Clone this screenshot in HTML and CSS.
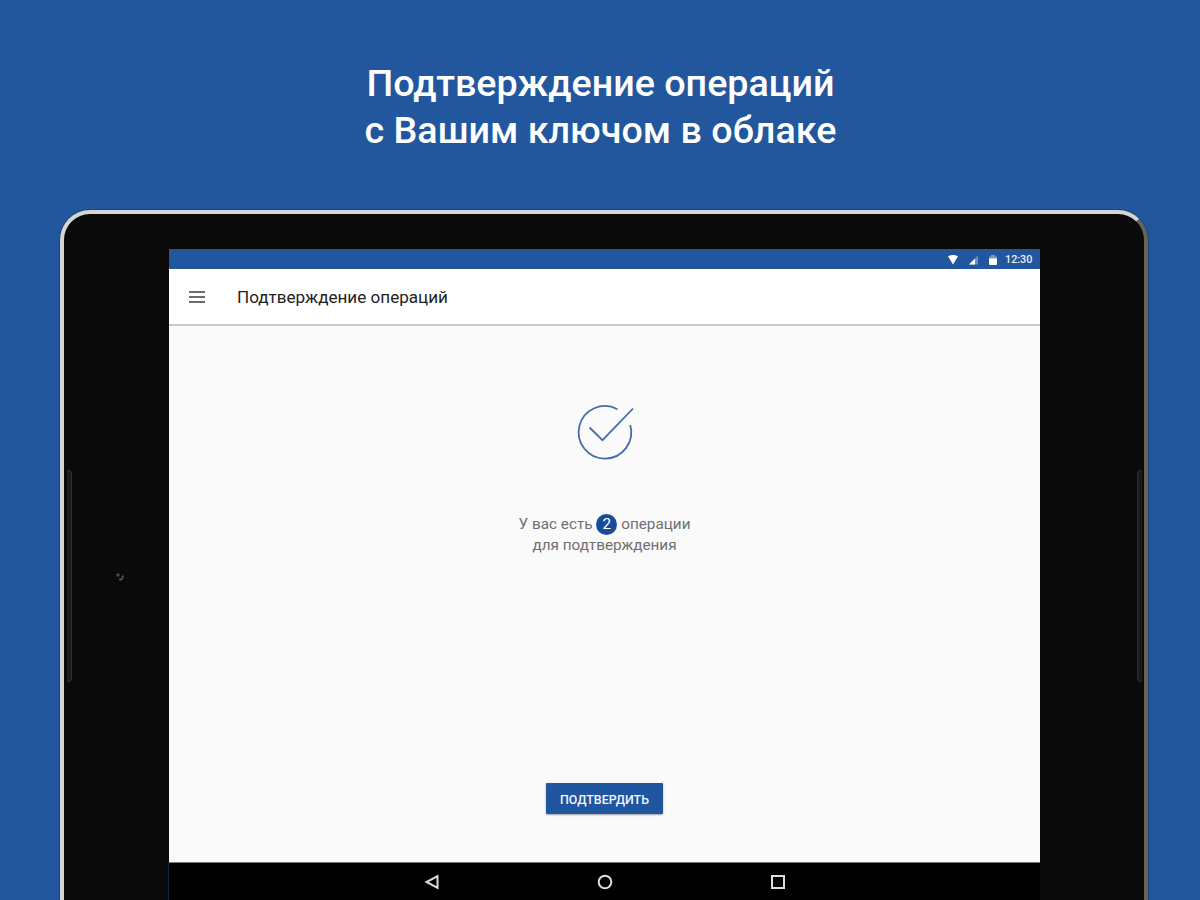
FILE: index.html
```html
<!DOCTYPE html>
<html lang="ru">
<head>
    <meta charset="UTF-8">
    <meta name="viewport" content="width=device-width, initial-scale=1.0">
    <title>Подтверждение операций</title>
    <link rel="stylesheet" href="styles.css">
</head>
<body>
    <h1 class="headline">Подтверждение операций<br>с Вашим ключом в облаке</h1>

    <div class="tablet">
        <div class="speaker left"></div>
        <svg class="camera" width="10" height="10" viewBox="0 0 10 10">
            <circle cx="3" cy="3" r="1.8" fill="#45406f"/>
            <path d="M4 7.500q3.500 1 4-4" fill="none" stroke="#55555a" stroke-width="1.8"/>
        </svg>
        <div class="screen">
            <div class="status-bar">
                <svg class="status-icons" width="52" height="12" viewBox="0 0 52 12">
                    <path d="M0 2.2q5-2.4 10 0L5 10.500z" fill="#fff"/>
                    <path d="M30 1.500v9h-9z" fill="#fff" opacity=".35"/>
                    <path d="M27 4.500v6h-6z" fill="#fff"/>
                    <path d="M43 1h4v1.500h2V5h-8V2.500h2z" fill="#fff" opacity=".4"/>
                    <path d="M41 4.500h8V10q0 1-1 1h-6q-1 0-1-1z" fill="#fff"/>
                </svg>
                <span class="clock">12:30</span>
            </div>
            <div class="app-bar">
                <svg class="menu" width="16" height="12" viewBox="0 0 16 12">
                    <path d="M0 1h16M0 6h16M0 11h16" stroke="#6c6c6c" stroke-width="2"/>
                </svg>
                <span class="app-title">Подтверждение операций</span>
            </div>
            <div class="content">
                <svg class="check" width="62" height="60" viewBox="0 0 62 60" fill="none" stroke="#466bac" stroke-width="1.8">
                    <path d="M43.500 7.200A26.300 26.300 0 1 0 56.200 23"/>
                    <path d="M15.500 25.500L28.500 38.200L59 6.500"/>
                </svg>
                <p class="message">У вас есть <span class="count">2</span> операции<br>для подтверждения</p>
                <button class="confirm">Подтвердить</button>
            </div>
            <div class="nav-bar">
                <svg width="16" height="16" viewBox="0 0 16 16">
                    <path d="M13.500 2.200v11.600L2.500 8z"/>
                </svg>
                <svg width="16" height="16" viewBox="0 0 16 16">
                    <circle cx="8" cy="8" r="6.300"/>
                </svg>
                <svg width="16" height="16" viewBox="0 0 16 16">
                    <rect x="2" y="2" width="12" height="12"/>
                </svg>
            </div>
        </div>
        <div class="speaker right"></div>
    </div>
</body>
</html>
```
FILE: styles.css
```css
* {
    margin: 0;
    padding: 0;
    box-sizing: border-box;
}

body {
    height: 900px;
    overflow: hidden;
    background: #23579d;
    font-family: Roboto, sans-serif;
}

.headline {
    height: 210px;
    padding: 60px 0 0 1px;
    text-align: center;
    font-size: 37.7px;
    font-weight: 500;
    line-height: 47px;
    white-space: nowrap;
    color: #fff;
}

.tablet {
    position: relative;
    width: 1088px;
    height: 720px;
    margin-left: 60px;
    padding: 35px 103px 0 105px;
    background: #0a0a0a;
    border: 4px solid #d2d6d5;
    border-right-color: #66635b;
    border-radius: 30px;
    box-shadow: 0 0 0 1px #1d4570;
}

/* speaker grooves and camera sit on the bezel */
.speaker {
    position: absolute;
    top: 256px;
    width: 5px;
    height: 212px;
    background: #1c1c1c;
    border: 1px solid #303030;
}

.speaker.left {
    left: 3px;
    border-left: none;
    border-radius: 0 4px 4px 0;
}

.speaker.right {
    right: 2px;
    border-right: none;
    border-radius: 4px 0 0 4px;
}

.camera {
    position: absolute;
    left: 51px;
    top: 358px;
}

.screen {
    width: 871px;
    display: flex;
    flex-direction: column;
}

.status-bar {
    height: 20px;
    padding: 1px 8px 0 0;
    display: flex;
    align-items: center;
    justify-content: flex-end;
    background: #2257a0;
    color: #e8eef8;
}

.status-icons {
    margin-right: 5px;
}

.clock {
    width: 27px;
    font-size: 10.8px;
    font-weight: 500;
    white-space: nowrap;
}

.app-bar {
    height: 57px;
    padding-left: 20px;
    display: flex;
    align-items: center;
    background: #fff;
    border-bottom: 2px solid #c9c9c9;
}

.menu {
    margin-right: 32px;
}

.app-title {
    font-size: 17.1px;
    color: #222;
}

.content {
    height: 536px;
    padding-top: 76px;
    display: flex;
    flex-direction: column;
    align-items: center;
    background: #fafafa;
}

.message {
    margin-top: 52px;
    text-align: center;
    font-size: 15.3px;
    line-height: 21px;
    white-space: nowrap;
    color: #707070;
}

.count {
    display: inline-block;
    width: 21px;
    height: 21px;
    border-radius: 50%;
    background: #174c9c;
    color: #fff;
    vertical-align: top;
}

.confirm {
    width: 117px;
    height: 31px;
    margin-top: 227px;
    padding-top: 2px;
    border: none;
    border-radius: 1px;
    background: #2055a0;
    box-shadow: 0 1px 2px rgba(0, 0, 0, 0.35);
    color: #f1f5ff;
    font-family: inherit;
    font-size: 12.4px;
    font-weight: 500;
    text-transform: uppercase;
}

.nav-bar {
    height: 38px;
    padding: 11px 254px 0 255px;
    display: flex;
    justify-content: space-between;
    background: #000;
    border-top: 1px solid #777;
    box-shadow: -1px 0 #10253f;
}

.nav-bar svg {
    fill: none;
    stroke: #ddd;
    stroke-width: 2;
}
```
